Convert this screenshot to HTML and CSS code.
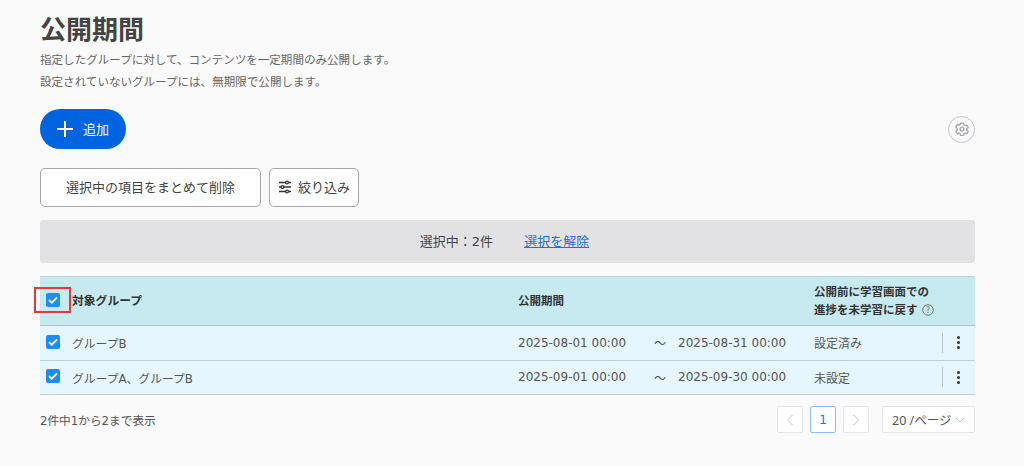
FILE: index.html
```html
<!DOCTYPE html>
<html lang="ja">
<head>
<meta charset="utf-8">
<title>公開期間</title>
<link rel="stylesheet" href="styles.css">
</head>
<body>
<main class="page">
  <h1 class="title">公開期間</h1>
  <p class="desc">指定したグループに対して、コンテンツを一定期間のみ公開します。<br>設定されていないグループには、無期限で公開します。</p>
  <div class="add-row">
    <button class="add-btn">
      <svg class="plus" width="16" height="16" viewBox="0 0 16 16"><path d="M8 0v16M0 8h16" stroke="#fff" stroke-width="2" fill="none"/></svg>
      <span>追加</span>
    </button>
    <button class="gear-btn" aria-label="設定">
      <svg width="14" height="14" viewBox="0 0 24 24" fill="none" stroke="#a3a9ae" stroke-width="2.400" stroke-linejoin="round"><path d="M9.600 2h4.800l.7 3 2.100 1.200 3-.9 2.300 4-2.200 2.200v2.400l2.200 2.200-2.300 4-3-.9-2.100 1.200-.7 3H9.600l-.7-3-2.100-1.200-3 .9-2.300-4 2.200-2.200v-2.400L1.500 8.300l2.300-4 3 .9L8.900 4z"/><circle cx="12" cy="12" r="3.200"/></svg>
    </button>
  </div>
  <div class="tools">
    <button class="tool-btn bulk">選択中の項目をまとめて削除</button>
    <button class="tool-btn filter">
      <svg width="14" height="14" viewBox="0 0 14 14" fill="none" stroke="#333" stroke-width="1.300"><path d="M1 2.500h12M1 7h12M1 11.500h12"/><circle cx="9" cy="2.500" r="1.400" fill="#fff"/><circle cx="4.500" cy="7" r="1.400" fill="#fff"/><circle cx="9" cy="11.500" r="1.400" fill="#fff"/></svg>
      <span>絞り込み</span>
    </button>
  </div>
  <div class="band"><span class="count">選択中：2件</span><a class="clear" href="#">選択を解除</a></div>
  <table class="grid">
    <colgroup><col class="c-check"><col class="c-group"><col class="c-from"><col class="c-tilde"><col class="c-to"><col class="c-flag"><col class="c-menu"></colgroup>
    <thead>
      <tr>
        <th class="check"><span class="marked"><span class="box"><svg width="10" height="8" viewBox="0 0 10 8"><path d="M1 4l2.800 2.800L9 1.300" fill="none" stroke="#fff" stroke-width="1.800"/></svg></span></span></th>
        <th class="first">対象グループ</th>
        <th colspan="3">公開期間</th>
        <th>公開前に学習画面での<br>進捗を未学習に戻す <svg class="help" width="12" height="12" viewBox="0 0 12 12"><circle cx="6" cy="6" r="5.300" fill="none" stroke="#777"/><text x="6" y="8.800" text-anchor="middle" class="help-q">?</text></svg></th>
        <th></th>
      </tr>
    </thead>
    <tbody>
      <tr>
        <td class="check"><span class="box"><svg width="10" height="8" viewBox="0 0 10 8"><path d="M1 4l2.800 2.800L9 1.300" fill="none" stroke="#fff" stroke-width="1.800"/></svg></span></td>
        <td class="first">グループB</td>
        <td>2025-08-01 00:00</td><td class="tilde">～</td><td>2025-08-31 00:00</td>
        <td>設定済み</td>
        <td class="menu"><span class="kebab"><i></i><i></i><i></i></span></td>
      </tr>
      <tr>
        <td class="check"><span class="box"><svg width="10" height="8" viewBox="0 0 10 8"><path d="M1 4l2.800 2.800L9 1.300" fill="none" stroke="#fff" stroke-width="1.800"/></svg></span></td>
        <td class="first">グループA、グループB</td>
        <td>2025-09-01 00:00</td><td class="tilde">～</td><td>2025-09-30 00:00</td>
        <td>未設定</td>
        <td class="menu"><span class="kebab"><i></i><i></i><i></i></span></td>
      </tr>
    </tbody>
  </table>
  <div class="foot">
    <span class="range">2件中1から2まで表示</span>
    <nav class="pager">
      <span class="pg"><svg width="8" height="12" viewBox="0 0 8 12"><path d="M6.500 1L1.500 6l5 5" fill="none" stroke="#c4c4c4"/></svg></span>
      <span class="pg current">1</span>
      <span class="pg"><svg width="8" height="12" viewBox="0 0 8 12"><path d="M1.500 1l5 5-5 5" fill="none" stroke="#c4c4c4"/></svg></span>
      <span class="size">20 /ページ<svg width="10" height="6" viewBox="0 0 10 6"><path d="M1 1l4 4 4-4" fill="none" stroke="#c4c4c4"/></svg></span>
    </nav>
  </div>
</main>
</body>
</html>
```
FILE: styles.css
```css
*, *::after { box-sizing: border-box; }
html, body { margin: 0; height: 100%; }
body {
  background: #fafafa;
  color: #444;
  font-family: "DejaVu Sans", "Noto Sans CJK JP", sans-serif;
  font-size: 12px;
  overflow: hidden;
}
.page { padding: 10px 49px 0 40px; }
.title { margin: 0; font-size: 26px; line-height: 36px; font-weight: 700; color: #444; font-family: "Noto Sans CJK JP", sans-serif; }
.desc { margin: 3px 0 0; font-size: 11.550px; line-height: 22px; color: #666; }
.add-row { display: flex; justify-content: space-between; align-items: center; margin-top: 16px; }
.add-btn {
  display: flex; align-items: center; gap: 10px;
  width: 86px; height: 40px; padding: 0 0 0 17px;
  border: 0; border-radius: 20px; background: #0064e0; color: #fff;
  font: inherit; font-size: 13px;
}
.add-btn span { margin-bottom: 2px; }
.gear-btn {
  display: flex; align-items: center; justify-content: center;
  width: 27px; height: 27px; padding: 0;
  border: 1px solid #c4c7ca; border-radius: 50%; background: #fafafa;
}
.tools { display: flex; gap: 8px; margin-top: 19px; }
.tool-btn {
  display: flex; align-items: center; justify-content: center; gap: 6px;
  height: 39px; padding: 0 0 2px;
  border: 1px solid #a8a8a8; border-radius: 5px; background: #fff;
  color: #444; font: inherit; font-size: 13px;
}
.bulk { width: 221px; }
.filter { width: 90px; }
.band {
  display: flex; align-items: center; justify-content: center; gap: 31px;
  height: 43px; margin-top: 13px; padding: 0 6px 2px 0;
  background: #e2e2e4; border-radius: 3px; font-size: 13px;
}
.clear { color: #1f6fe0; }
.grid { width: 935px; margin-top: 13px; border-collapse: collapse; table-layout: fixed; border-top: 1px solid #c4ced2; }
.c-check { width: 32px; } .c-group { width: 439px; } .c-from { width: 135px; } .c-tilde { width: 25px; }
.c-to { width: 136px; } .c-flag { width: 127px; } .c-menu { width: 41px; }
th, td { padding: 0 0 0 7px; text-align: left; vertical-align: middle; }
th { height: 49px; background: #c7e9f0; font-size: 11.500px; line-height: 18px; font-weight: 700; color: #333; border-bottom: 1px solid #b4c4ca; }
td { height: 34.500px; background: #e5f6ff; font-size: 12px; color: #555; border-bottom: 1px solid #c4ced2; }
th.first, td.first { padding-left: 0; }
th.first { font-size: 11.800px; }
td.first { font-size: 11.800px; }
.check { padding: 0 0 0 6px; }
.box { display: flex; align-items: center; justify-content: center; width: 14px; height: 14px; margin-bottom: 2px; border-radius: 2px; background: #1e8cf5; }
.marked { position: relative; display: block; width: 14px; }
.marked::after { content: ""; position: absolute; left: -12px; top: -6px; width: 37px; height: 26px; border: 2px solid #e8383d; }
.help { vertical-align: -2px; }
.help-q { font-size: 8px; fill: #777; font-weight: 400; }
.tilde { padding: 0 0 0 8px; }
.menu { padding: 0 0 0 8px; }
.kebab { display: flex; flex-direction: column; align-items: center; justify-content: center; gap: 2px; width: 32px; height: 20px; border-left: 1px solid #b9c6cb; }
.kebab i { display: block; width: 3px; height: 3px; border-radius: 50%; background: #333; }
.foot { display: flex; justify-content: space-between; align-items: center; margin-top: 11px; height: 27px; }
.range { font-size: 11.700px; color: #555; }
.pager { display: flex; gap: 7px; }
.pg { display: flex; align-items: center; justify-content: center; width: 26px; height: 27px; border: 1px solid #e6e6e6; border-radius: 2px; background: #fff; }
.pg.current { border-color: #8fbdf0; color: #1f6fe0; font-weight: 500; }
.size { display: flex; align-items: center; justify-content: space-between; width: 93px; height: 27px; margin-left: 6px; padding: 0 9px; border: 1px solid #e6e6e6; border-radius: 2px; background: #fff; color: #555; font-family: "Noto Sans", "Noto Sans CJK JP", sans-serif; font-size: 12.500px; }
```
